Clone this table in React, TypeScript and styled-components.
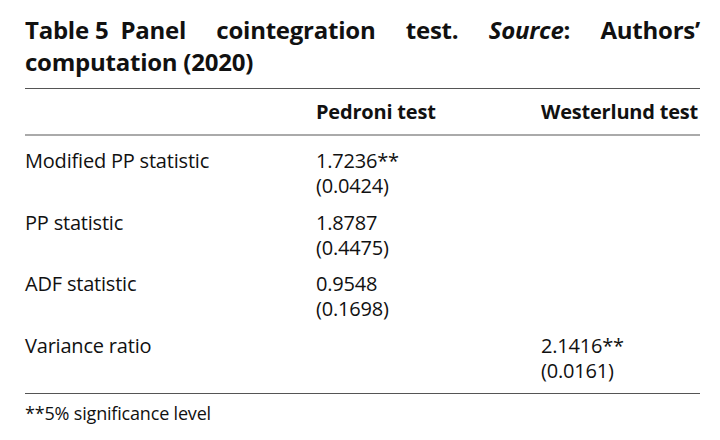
import styled, { createGlobalStyle } from "styled-components";

const GlobalStyle = createGlobalStyle`
  html, body {
    margin: 0;
    padding: 0;
    background: #ffffff;
  }

  body {
    font-family: "Open Sans", "Noto Sans", sans-serif;
    color: #111111;
  }
`;

type Row = {
  label: string;
  pedroni?: [string, string];
  westerlund?: [string, string];
};

const rows: Row[] = [
  { label: "Modified PP statistic", pedroni: ["1.7236**", "(0.0424)"] },
  { label: "PP statistic", pedroni: ["1.8787", "(0.4475)"] },
  { label: "ADF statistic", pedroni: ["0.9548", "(0.1698)"] },
  { label: "Variance ratio", westerlund: ["2.1416**", "(0.0161)"] },
];

const Value = ({ v }: { v?: [string, string] }) => (
  <Cell>
    {v && (
      <>
        <div>{v[0]}</div>
        <div>{v[1]}</div>
      </>
    )}
  </Cell>
);

const App = () => {
  return (
    <Page>
      <GlobalStyle />
      <Caption>
        <Label>Table 5</Label>Panel cointegration test. <em>Source</em>:
        Authors’ computation (2020)
      </Caption>

      <Table>
        <HeadRow>
          <HeadCell />
          <HeadCell>Pedroni test</HeadCell>
          <HeadCell>Westerlund test</HeadCell>
        </HeadRow>

        <Body>
          {rows.map((r) => (
            <BodyRow key={r.label}>
              <Cell>{r.label}</Cell>
              <Value v={r.pedroni} />
              <Value v={r.westerlund} />
            </BodyRow>
          ))}
        </Body>
      </Table>

      <Footnote>**5% significance level</Footnote>
    </Page>
  );
};

const Page = styled.div`
  width: 675px;
  padding: 14px 20px 0 25px;
`;

const Caption = styled.h1`
  margin: 0;
  font-size: 24px;
  font-weight: 700;
  line-height: 32px;
  letter-spacing: -0.01em;
  text-align: justify;
  text-align-last: left;

  em {
    font-style: italic;
  }
`;

const Label = styled.span`
  display: inline-block;
  margin-right: 12px;
`;

const Table = styled.div`
  margin-top: 10px;
  border-top: 1px solid #555555;
  border-bottom: 1px solid #555555;
`;

const HeadRow = styled.div`
  display: grid;
  grid-template-columns: 291px 225px 1fr;
  height: 45px;
  align-items: center;
  border-bottom: 2px solid #aaaaaa;
`;

const HeadCell = styled.div`
  font-size: 20px;
  font-weight: 700;
  letter-spacing: -0.01em;
`;

const Body = styled.div`
  padding: 12px 0 10px;
`;

const BodyRow = styled.div`
  display: grid;
  grid-template-columns: 291px 225px 1fr;
  font-size: 20px;
  line-height: 25px;
  letter-spacing: -0.01em;
  font-weight: 400;
  padding-bottom: 11.5px;

  &:last-child {
    padding-bottom: 0;
  }
`;

const Cell = styled.div``;

const Footnote = styled.div`
  margin-top: 7px;
  font-size: 18px;
  letter-spacing: -0.01em;
`;

export default App;
